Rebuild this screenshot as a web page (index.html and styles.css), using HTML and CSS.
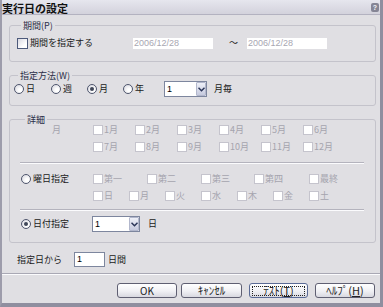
FILE: index.html
```html
<!DOCTYPE html>
<html lang="ja">
<head>
<meta charset="utf-8">
<link rel="stylesheet" href="styles.css">
</head>
<body>
<div class="window">
  <div class="titlebar">
    <span class="title">実行日の設定</span>
    <span class="help">?</span>
  </div>
  <div class="client">
    <fieldset class="group g1">
      <legend>期間(P)</legend>
      <div class="row r1">
        <label class="chk w116"><span class="cb on"></span><span>期間を指定する</span></label>
        <span class="date">2006/12/28</span>
        <span class="tilde">～</span>
        <span class="date">2006/12/28</span>
      </div>
    </fieldset>

    <fieldset class="group g2">
      <legend>指定方法(W)</legend>
      <div class="row r2">
        <label class="rad w37"><span class="rb"></span><span>日</span></label>
        <label class="rad w36"><span class="rb"></span><span>週</span></label>
        <label class="rad w36"><span class="rb on"></span><span>月</span></label>
        <label class="rad w41"><span class="rb"></span><span>年</span></label>
        <span class="sel s43"><span class="val">1</span><span class="drop"><svg width="7" height="5" viewBox="0 0 7 5"><path d="M0.5 0.8 L3.5 3.8 L6.5 0.8" fill="none" stroke="#2a3558" stroke-width="1.5"/></svg></span></span>
        <span class="after">月毎</span>
      </div>
    </fieldset>

    <fieldset class="group g3">
      <legend>詳細</legend>
      <div class="row mrow">
        <span class="lab dis">月</span>
        <label class="chk w42 dis"><span class="cb"></span><span>1月</span></label>
        <label class="chk w42 dis"><span class="cb"></span><span>2月</span></label>
        <label class="chk w42 dis"><span class="cb"></span><span>3月</span></label>
        <label class="chk w42 dis"><span class="cb"></span><span>4月</span></label>
        <label class="chk w42 dis"><span class="cb"></span><span>5月</span></label>
        <label class="chk w42 dis"><span class="cb"></span><span>6月</span></label>
      </div>
      <div class="row mrow m2">
        <span class="lab"></span>
        <label class="chk w42 dis"><span class="cb"></span><span>7月</span></label>
        <label class="chk w42 dis"><span class="cb"></span><span>8月</span></label>
        <label class="chk w42 dis"><span class="cb"></span><span>9月</span></label>
        <label class="chk w42 dis"><span class="cb"></span><span>10月</span></label>
        <label class="chk w42 dis"><span class="cb"></span><span>11月</span></label>
        <label class="chk w42 dis"><span class="cb"></span><span>12月</span></label>
      </div>
      <div class="sep"></div>
      <div class="row wrow">
        <label class="rad w72"><span class="rb"></span><span>曜日指定</span></label>
        <label class="chk w54 dis"><span class="cb"></span><span>第一</span></label>
        <label class="chk w54 dis"><span class="cb"></span><span>第二</span></label>
        <label class="chk w53 dis"><span class="cb"></span><span>第三</span></label>
        <label class="chk w55 dis"><span class="cb"></span><span>第四</span></label>
        <label class="chk dis last"><span class="cb"></span><span>最終</span></label>
      </div>
      <div class="row drow">
        <span class="lab"></span>
        <label class="chk w36 dis"><span class="cb"></span><span>日</span></label>
        <label class="chk w36 dis"><span class="cb"></span><span>月</span></label>
        <label class="chk w36 dis"><span class="cb"></span><span>火</span></label>
        <label class="chk w36 dis"><span class="cb"></span><span>水</span></label>
        <label class="chk w36 dis"><span class="cb"></span><span>木</span></label>
        <label class="chk w36 dis"><span class="cb"></span><span>金</span></label>
        <label class="chk w36 dis"><span class="cb"></span><span>土</span></label>
      </div>
      <div class="sep s2"></div>
      <div class="row frow">
        <label class="rad w71"><span class="rb on"></span><span>日付指定</span></label>
        <span class="sel s48"><span class="val">1</span><span class="drop"><svg width="7" height="5" viewBox="0 0 7 5"><path d="M0.5 0.8 L3.5 3.8 L6.5 0.8" fill="none" stroke="#2a3558" stroke-width="1.5"/></svg></span></span>
        <span class="after a8">日</span>
      </div>
    </fieldset>

    <div class="row brow">
      <span class="blab">指定日から</span>
      <span class="edit">1</span>
      <span class="after a3">日間</span>
    </div>

    <div class="hline"></div>

    <div class="row buttons">
      <span class="btn b-ok">OK</span>
      <span class="btn b-cancel">ｷｬﾝｾﾙ</span>
      <span class="btn b-test"><span class="focus">ﾃｽﾄ(<u>T</u>)</span></span>
      <span class="btn b-help">ﾍﾙﾌﾟ(<u>H</u>)</span>
    </div>
  </div>
</div>
</body>
</html>
```

FILE: styles.css
```css
* {
  box-sizing: border-box;
  margin: 0;
  padding: 0;
}

html, body {
  width: 383px;
  height: 307px;
  overflow: hidden;
  background: #e0dfe3;
}

body {
  font-family: "Noto Sans CJK JP", "Liberation Sans", sans-serif;
  font-size: 9px;
  line-height: 10px;
  color: #1a1a1a;
}

.window {
  width: 383px;
  height: 307px;
  display: flex;
  flex-direction: column;
  background: #e0dfe3;
  border-left: 2px solid #9d9cab;
  border-right: 3px solid #8f8e9f;
  border-bottom: 4px solid #8f8e9f;
}

.titlebar {
  flex: none;
  height: 15px;
  display: flex;
  align-items: center;
  justify-content: space-between;
  background: linear-gradient(#e6e6ee, #d3d2dc);
  border-bottom: 1px solid #b3b2c0;
}

.title {
  font-size: 11px;
  line-height: 12px;
  font-weight: bold;
  color: #111;
  margin-top: 1px;
}

.help {
  width: 8px;
  height: 9px;
  margin-right: 1px;
  margin-top: 1px;
  border-radius: 2px;
  background: #858595;
  color: #f4f4f8;
  font-family: "Liberation Sans", sans-serif;
  font-size: 7px;
  line-height: 9px;
  font-weight: bold;
  text-align: center;
}

.client {
  flex: 1;
  display: flex;
  flex-direction: column;
  padding-left: 7px;
}

.group {
  width: 367px;
  border: 1px solid #c4c3cb;
  border-radius: 3px;
  padding: 0;
  min-width: 0;
}

.group legend {
  margin-left: 4px;
  padding: 0 2px;
  font-size: 9px;
  line-height: 11px;
  color: #2b2e48;
}

.g1 { margin-top: 5px; padding: 6px 0 12px 7px; }
.g2 { margin-top: 8px; padding: 0 0 8px 4px; }
.g3 { margin-top: 8px; padding: 0 11px 10px 11px; }

.row {
  display: flex;
  align-items: center;
}

.r1 { height: 12px; }
.r2 { height: 16px; }

.chk, .rad {
  display: flex;
  align-items: center;
  flex: none;
  gap: 2px;
}

.dis { color: #a5a4ae; }

.w116 { width: 116px; }
.w37 { width: 37px; }
.w36 { width: 36px; }
.w41 { width: 41px; }
.w42 { width: 42px; }
.w53 { width: 53px; }
.w54 { width: 54px; }
.w55 { width: 55px; }
.w71 { width: 71px; }
.w72 { width: 72px; }

.chk.w42, .chk.w36, .chk.w54, .chk.w53, .chk.w55, .chk.last { gap: 1px; }

.cb {
  width: 10px;
  height: 10px;
  flex: none;
  background: #fff;
  border: 1px solid #c5c4cd;
}

.cb.on {
  width: 11px;
  height: 11px;
  border-color: #4d5a7b;
  background: linear-gradient(135deg, #d9d9e2, #ffffff 70%);
}

.rb {
  width: 10px;
  height: 10px;
  flex: none;
  border-radius: 50%;
  border: 1px solid #4f566d;
  background: radial-gradient(circle at 65% 65%, #ffffff 20%, #d3d3dc 100%);
  display: flex;
  align-items: center;
  justify-content: center;
}

.rb.on::after {
  content: "";
  width: 4px;
  height: 4px;
  border-radius: 50%;
  background: #3f4658;
}

.date {
  width: 80px;
  height: 11px;
  flex: none;
  background: #fff;
  color: #a8a7b2;
  font-family: "Liberation Sans", sans-serif;
  font-size: 9px;
  line-height: 11px;
  padding-left: 1px;
}

.tilde {
  width: 34px;
  flex: none;
  padding-left: 16px;
  color: #1a1a1a;
}

.sel {
  display: flex;
  flex: none;
  height: 16px;
  background: #fff;
  border: 1px solid #7d869e;
}

.s43 { width: 43px; }
.s48 { width: 48px; }

.sel .val {
  flex: 1;
  padding-left: 2px;
  font-family: "Liberation Sans", sans-serif;
  font-size: 9px;
  line-height: 14px;
  color: #000;
}

.sel .drop {
  width: 10px;
  margin: 0;
  background: linear-gradient(#eef0f8, #c6cade);
  border: 1px solid #b2b7cc;
  border-radius: 1px;
  display: flex;
  align-items: center;
  justify-content: center;
}

.after {
  margin-left: 7px;
}

.a8 { margin-left: 8px; }
.a3 { margin-left: 3px; }

.mrow { height: 10px; }
.m2 { margin-top: 7px; }

.lab {
  width: 72px;
  flex: none;
  padding-left: 31px;
}

.sep {
  margin: 10px 0 0 -1px;
  width: 344px;
  height: 2px;
  border-top: 1px solid #b4b3bd;
  border-bottom: 1px solid #fbfbfd;
}

.s2 { margin-top: 8px; }

.wrow { height: 11px; margin-top: 9px; }
.drow { height: 10px; margin-top: 7px; }
.frow { height: 16px; margin-top: 5px; }

.brow {
  height: 15px;
  margin-top: 9px;
  padding-left: 8px;
}

.blab {
  width: 57px;
  flex: none;
}

.edit {
  width: 31px;
  height: 15px;
  flex: none;
  background: #fff;
  border: 1px solid #7d869e;
  padding-left: 2px;
  font-family: "Liberation Sans", sans-serif;
  font-size: 9px;
  line-height: 13px;
  color: #000;
}

.hline {
  margin: 6px 0 0 -7px;
  height: 2px;
  border-top: 1px solid #a9a8b4;
  border-bottom: 1px solid #fbfbfd;
}

.buttons {
  margin-top: 8px;
  height: 15px;
  padding-left: 108px;
}

.btn {
  height: 15px;
  flex: none;
  display: flex;
  align-items: center;
  justify-content: center;
  border: 1px solid #5f5f72;
  border-radius: 3px;
  background: linear-gradient(#ffffff, #f0f0f4 55%, #d8d8e0);
  font-size: 11px;
  line-height: 11px;
  color: #222;
}

.btn u { text-decoration: underline; text-underline-offset: 1px; }

.b-ok { width: 60px; font-size: 10px; }
.b-cancel { width: 61px; margin-left: 4px; }
.b-test { width: 59px; margin-left: 7px; border-color: #5a6a95; }
.b-help { width: 60px; margin-left: 7px; }

.focus {
  display: flex;
  align-items: center;
  justify-content: center;
  width: 53px;
  height: 10px;
  border: 1px dotted #222;
}
```
